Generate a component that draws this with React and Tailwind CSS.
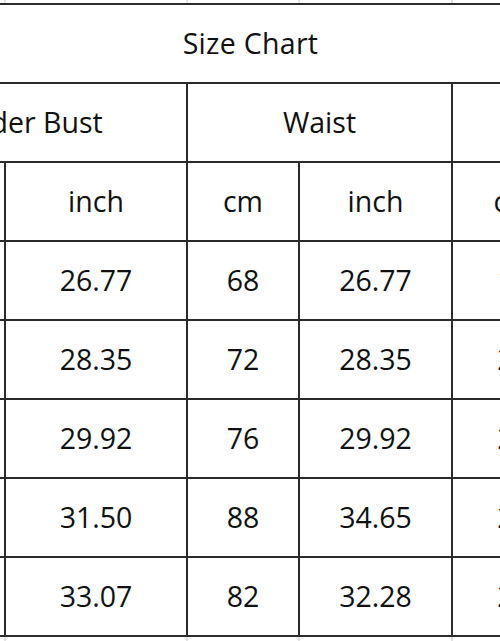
import React from 'react';

const cols = 'grid grid-cols-[135px_180px_110px_151px_121px_56px] gap-x-[2px]';

const rows = [
    ['68', '26.77', '68', '26.77', '17', '37.01'],
    ['72', '28.35', '72', '28.35', '20', '38.58'],
    ['76', '29.92', '76', '29.92', '21', '40.16'],
    ['80', '31.50', '88', '34.65', '22', '41.73'],
    ['84', '33.07', '82', '32.28', '23', '43.31'],
];

const Cell = ({ className = '', children }) => (
    <div className={`bg-white flex items-center justify-center h-[77px] ${className}`}>{children}</div>
);

const FaintStrip = ({ h }) => (
    <div className={`${cols} bg-[#e2e2e2] ${h}`}>
        {[0, 1, 2, 3, 4, 5].map((i) => (
            <div key={i} className="bg-white" />
        ))}
    </div>
);

const SizeChart = () => {
    return (
        <div className="w-[500px] h-[641px] overflow-hidden bg-white text-[#111] text-[28.5px] font-['Open_Sans',sans-serif]">
            <div className="ml-[-131px] w-[763px]">
                <FaintStrip h="h-[3px]" />

                <div className={`${cols} gap-y-[2px] bg-[#2b2b2b] border-y-2 border-[#2b2b2b]`}>
                    {/* Title */}
                    <Cell className="col-span-6 tracking-[0.3px]">Size Chart</Cell>

                    {/* Measurement names */}
                    <Cell className="col-span-2">Under Bust</Cell>
                    <Cell className="col-span-2">Waist</Cell>
                    <Cell className="col-span-2 !justify-start pl-[45px]">Hip</Cell>

                    {/* Units */}
                    {['cm', 'inch', 'cm', 'inch', 'cm', 'inch'].map((u, i) => (
                        <Cell key={`u${i}`}>{u}</Cell>
                    ))}

                    {/* Values */}
                    {rows.map((r, ri) =>
                        r.map((v, ci) => <Cell key={`${ri}-${ci}`}>{v}</Cell>)
                    )}
                </div>

                <FaintStrip h="h-[10px]" />
            </div>
        </div>
    );
};

export default SizeChart;
